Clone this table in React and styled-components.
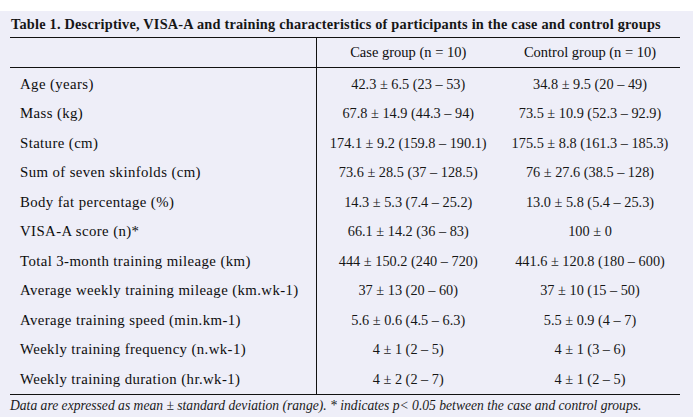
import React from "react";
import styled, { createGlobalStyle } from "styled-components";

const GlobalStyle = createGlobalStyle`
  html, body {
    margin: 0;
    padding: 0;
    background: #ffffff;
  }
  body {
    font-family: "Liberation Serif", "Times New Roman", serif;
    color: #161616;
  }
`;

const rows = [
  ["Age (years)", "42.3 ± 6.5 (23 – 53)", "34.8 ± 9.5 (20 – 49)"],
  ["Mass (kg)", "67.8 ± 14.9 (44.3 – 94)", "73.5 ± 10.9 (52.3 – 92.9)"],
  ["Stature (cm)", "174.1 ± 9.2 (159.8 – 190.1)", "175.5 ± 8.8 (161.3 – 185.3)"],
  ["Sum of seven skinfolds (cm)", "73.6 ± 28.5 (37 – 128.5)", "76 ± 27.6 (38.5 – 128)"],
  ["Body fat percentage (%)", "14.3 ± 5.3 (7.4 – 25.2)", "13.0 ± 5.8 (5.4 – 25.3)"],
  ["VISA-A score (n)*", "66.1 ± 14.2 (36 – 83)", "100 ± 0"],
  ["Total 3-month training mileage (km)", "444 ± 150.2 (240 – 720)", "441.6 ± 120.8 (180 – 600)"],
  ["Average weekly training mileage (km.wk-1)", "37 ± 13 (20 – 60)", "37 ± 10 (15 – 50)"],
  ["Average training speed (min.km-1)", "5.6 ± 0.6 (4.5 – 6.3)", "5.5 ± 0.9 (4 – 7)"],
  ["Weekly training frequency (n.wk-1)", "4 ± 1 (2 – 5)", "4 ± 1 (3 – 6)"],
  ["Weekly training duration (hr.wk-1)", "4 ± 2 (2 – 7)", "4 ± 1 (2 – 5)"],
];

function App() {
  return (
    <>
      <GlobalStyle />
      <Sheet>
        <Caption>
          Table 1. Descriptive, VISA-A and training characteristics of participants in the case and control groups
        </Caption>
        <DataTable>
          <colgroup>
            <col style={{ width: 306 }} />
            <col style={{ width: 184 }} />
            <col style={{ width: 180 }} />
          </colgroup>
          <thead>
            <tr>
              <HeadCell />
              <HeadCell $divider>Case group (n = 10)</HeadCell>
              <HeadCell>Control group (n = 10)</HeadCell>
            </tr>
          </thead>
          <tbody>
            {rows.map(([label, caseVal, controlVal], i) => (
              <Row key={label} $first={i === 0}>
                <Label>{label}</Label>
                <Value $divider>{caseVal}</Value>
                <Value>{controlVal}</Value>
              </Row>
            ))}
          </tbody>
        </DataTable>
        <Note>
          Data are expressed as mean ± standard deviation (range). * indicates p&lt; 0.05 between the case and control groups.
        </Note>
      </Sheet>
    </>
  );
}

const Sheet = styled.div`
  margin-top: 11px;
  height: 406px;
  background: #eeeef8;
  padding: 0 0 0 10px;
  box-sizing: border-box;
  overflow: hidden;
`;

const Caption = styled.div`
  font-weight: bold;
  font-size: 14.3px;
  line-height: 26px;
  padding-left: 1px;
  letter-spacing: 0.22px;
  white-space: nowrap;
`;

const DataTable = styled.table`
  border-collapse: collapse;
  width: 670px;
  table-layout: fixed;
  border-top: 1.5px solid #111;
  border-bottom: 1.5px solid #111;
`;

const HeadCell = styled.th`
  height: 29px;
  padding: 0;
  font-weight: normal;
  font-size: 14.5px;
  text-align: center;
  color: #0d0d0d;
  border-bottom: 1.5px solid #111;
  border-left: ${(p) => (p.$divider ? "1.5px solid #111" : "none")};
`;

const Row = styled.tr`
  height: ${(p) => (p.$first ? "31.5px" : "29.5px")};
  td {
    padding-top: ${(p) => (p.$first ? "2px" : "0")};
  }
`;

const Label = styled.td`
  padding: 0 0 0 10px;
  font-size: 14.8px;
  letter-spacing: 0.4px;
  white-space: nowrap;
  color: #0d0d0d;
`;

const Value = styled.td`
  padding: 0;
  font-size: 14.3px;
  text-align: center;
  white-space: nowrap;
  border-left: ${(p) => (p.$divider ? "1.5px solid #111" : "none")};
`;

const Note = styled.div`
  font-family: "Liberation Serif", "DejaVu Serif", serif;
  font-style: italic;
  font-size: 13.6px;
  line-height: 22px;
  white-space: nowrap;
  color: #1a1a1a;
`;

export default App;
